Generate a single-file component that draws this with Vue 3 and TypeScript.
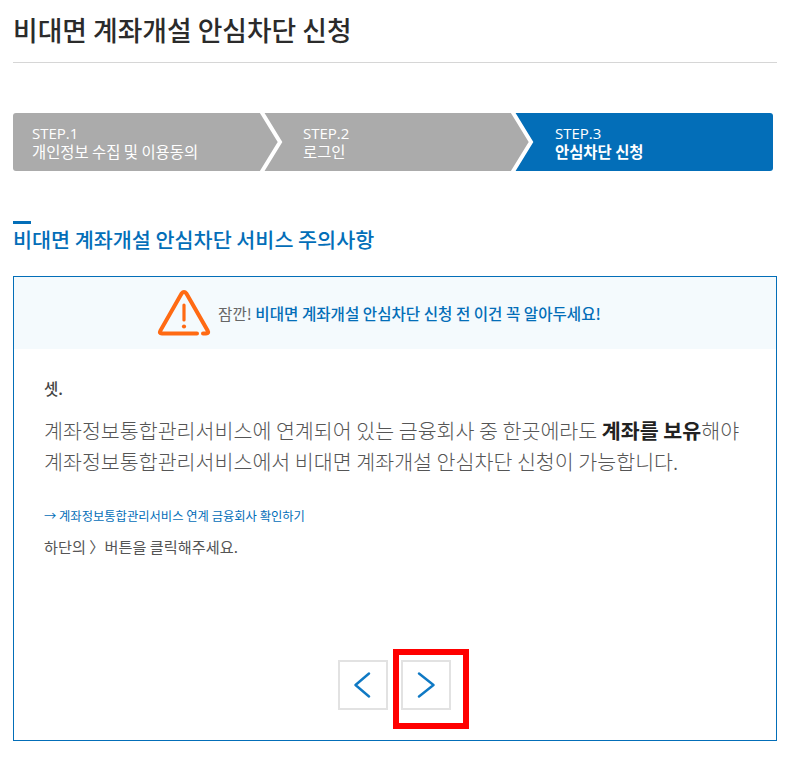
<script setup lang="ts">
interface Step { no: string; label: string; active?: boolean }
const steps: Step[] = [
  { no: 'STEP.1', label: '개인정보 수집 및 이용동의' },
  { no: 'STEP.2', label: '로그인' },
  { no: 'STEP.3', label: '안심차단 신청', active: true },
]
</script>

<template>
  <div class="page">
    <h1 class="title">비대면 계좌개설 안심차단 신청</h1>

    <ol class="steps">
      <li v-for="(s, i) in steps" :key="s.no" class="step" :class="{ active: s.active }">
        <span class="step-no">{{ s.no }}</span>
        <span class="step-label">{{ s.label }}</span>
        <svg v-if="i < 2" class="sep" width="30" height="58" viewBox="0 0 30 58" aria-hidden="true">
          <path d="M0 0 H3 L22 29 L3 58 H0 Z" fill="#ababab" />
          <path d="M3 -2 L22 29 L3 60" fill="none" stroke="#fff" stroke-width="4" />
        </svg>
      </li>
    </ol>

    <h2 class="section">비대면 계좌개설 안심차단 서비스 주의사항</h2>

    <section class="panel">
      <div class="banner">
        <svg class="warn" width="54" height="48" viewBox="0 0 54 48" aria-hidden="true">
          <path d="M40 44.5 H5 Q1.8 44.5 3.4 41.6 L24.6 4.6 Q27 1.6 29.4 4.6 L50.6 41.6 Q52.2 44.5 49 44.5 H46" fill="none" stroke="#ff6a13" stroke-width="4" stroke-linecap="round" stroke-linejoin="round" />
          <path d="M27 16 V31" stroke="#ff6a13" stroke-width="3.2" stroke-linecap="round" />
          <circle cx="27" cy="37.5" r="2.1" fill="#ff6a13" />
        </svg>
        <p class="banner-text"><span class="grey">잠깐!</span> <strong>비대면 계좌개설 안심차단 신청 전 이건 꼭 알아두세요!</strong></p>
      </div>

      <div class="body">
        <p class="num">셋.</p>
        <p class="lead">계좌정보통합관리서비스에 연계되어 있는 금융회사 중 한곳에라도 <b>계좌를 보유</b>해야<br />계좌정보통합관리서비스에서 비대면 계좌개설 안심차단 신청이 가능합니다.</p>
        <a class="link">→ 계좌정보통합관리서비스 연계 금융회사 확인하기</a>
        <p class="hint">하단의 〉버튼을 클릭해주세요.</p>
      </div>

      <div class="pager">
        <button class="nav" type="button" aria-label="이전">
          <svg width="20" height="26" viewBox="0 0 20 26"><path d="M16 1.5 L2.5 13 L16 24.5" fill="none" stroke="#0f79c4" stroke-width="2.4" stroke-linecap="round" stroke-linejoin="round" /></svg>
        </button>
        <button class="nav next" type="button" aria-label="다음">
          <svg width="20" height="26" viewBox="0 0 20 26"><path d="M3 1.5 L17.5 13 L3 24.5" fill="none" stroke="#0f79c4" stroke-width="2.4" stroke-linecap="round" stroke-linejoin="round" /></svg>
          <span class="highlight"></span>
        </button>
      </div>
    </section>
  </div>
</template>

<style>
html, body { margin: 0; background: #fff; }
</style>

<style scoped>
.page {
  width: 795px;
  height: 764px;
  box-sizing: border-box;
  padding: 0 18px 0 13px;
  overflow: hidden;
  font-family: "Noto Sans CJK KR", "Noto Sans", sans-serif;
  color: #333;
}
.title {
  margin: 0;
  height: 62px;
  line-height: 60px;
  border-bottom: 1px solid #d6d6d6;
  font-size: 26.8px;
  font-weight: 500;
  color: #2b2b2b;
}
.steps {
  list-style: none;
  margin: 50px 0 0;
  padding: 0;
  display: grid;
  grid-template-columns: 248px 251px 1fr;
  height: 58px;
  width: 760px;
}
.step {
  position: relative;
  display: flex;
  flex-direction: column;
  justify-content: center;
  padding-left: 19px;
  padding-bottom: 1px;
  background: #ababab;
  color: #fff;
  font-size: 15.4px;
  line-height: 18px;
}
.step:nth-child(2) { padding-left: 42px; }
.step:nth-child(3) { padding-left: 43px; }
.step:first-child { border-radius: 3px 0 0 3px; }
.step.active { background: #036eb8; border-radius: 0 3px 3px 0; }
.step-no { font-family: "Open Sans", "Noto Sans", sans-serif; font-size: 15px; }
.step.active .step-label { font-weight: 700; }
.sep { position: absolute; left: 100%; top: 0; margin-left: -3px; z-index: 1; overflow: hidden; }
.section {
  position: relative;
  margin: 50px 0 0;
  padding-top: 2px;
  height: 55px;
  box-sizing: border-box;
  line-height: 32px;
  font-size: 20.7px;
  font-weight: 500;
  color: #036eb8;
}
.section::before {
  content: "";
  position: absolute;
  left: 0;
  top: 0;
  width: 18px;
  height: 3px;
  background: #036eb8;
}
.panel {
  width: 764px;
  height: 465px;
  box-sizing: border-box;
  border: 1px solid #036eb8;
  display: flex;
  flex-direction: column;
}
.banner {
  height: 72px;
  flex: none;
  display: flex;
  align-items: center;
  justify-content: center;
  gap: 7px;
  background: #f4fafd;
  padding-right: 32px;
}
.warn { flex: none; }
.banner-text { margin: 0; font-size: 15.6px; }
.grey { color: #666; }
.banner-text strong { color: #036eb8; font-weight: 500; }
.body { padding: 28px 30px 0; flex: 1; }
.num { margin: 0; font-size: 15.5px; line-height: 22px; font-weight: 500; color: #444; }
.lead { margin: 16px 0 0; font-size: 20.6px; line-height: 31px; font-weight: 300; color: #555; }
.lead b { font-weight: 700; color: #222; }
.link { display: block; margin-top: 31px; font-size: 12.3px; line-height: 16px; color: #036eb8; }
.hint { margin: 11px 0 0; font-size: 15.2px; line-height: 22px; color: #555; }
.pager { display: flex; justify-content: center; gap: 13px; height: 80px; flex: none; padding-right: 2px; }
.nav {
  position: relative;
  width: 50px;
  height: 50px;
  padding: 0;
  background: #fff;
  border: 2px solid #e2e2e2;
  display: flex;
  align-items: center;
  justify-content: center;
}
.highlight {
  position: absolute;
  left: -10px;
  top: -13px;
  width: 76px;
  height: 80px;
  box-sizing: border-box;
  border: 6px solid #ff0000;
  pointer-events: none;
}
</style>
